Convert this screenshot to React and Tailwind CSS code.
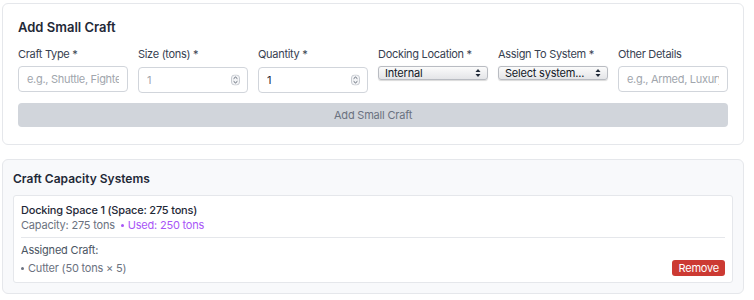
import { useState } from "react";

const Spinner = () => (
  <svg className="absolute right-[8px] top-1/2 -translate-y-1/2 w-[9px] h-[11px]" viewBox="0 0 9 11">
    <rect x="0.5" y="0.5" width="8" height="10" rx="3" fill="#f3f4f6" stroke="#c7cbd1" />
    <path d="M2.6 4.2 L4.5 2.6 L6.4 4.2" fill="none" stroke="#4b5563" strokeWidth="0.9" />
    <path d="M2.6 6.8 L4.5 8.4 L6.4 6.8" fill="none" stroke="#4b5563" strokeWidth="0.9" />
  </svg>
);

const SelectArrows = () => (
  <svg className="absolute right-[6px] top-1/2 -translate-y-1/2 w-[6px] h-[9px]" viewBox="0 0 6 9">
    <path d="M0.5 3.5 L3 0.5 L5.5 3.5 Z" fill="#1f2937" />
    <path d="M0.5 5.5 L3 8.5 L5.5 5.5 Z" fill="#1f2937" />
  </svg>
);

const Dot = () => (
  <span className="inline-block w-[3px] h-[3px] rounded-full bg-current align-middle mr-[4px] mb-[1px]" />
);

const Field = ({ label, children }) => (
  <div className="flex flex-col gap-[5px]">
    <label className="text-[11px] leading-[14px] tracking-[-0.3px] text-[#374151]">{label}</label>
    {children}
  </div>
);

const inputCls =
  "w-full h-[26px] rounded-[4px] border border-[#d1d5db] bg-white px-[8px] text-[11px] tracking-[-0.3px] text-[#1f2937] placeholder-[#a1a6ad] outline-none";

const FakeSelect = ({ value }) => (
  <div className="relative h-[14px] w-full rounded-[3px] border border-[#b9bcc2] bg-gradient-to-b from-[#fbfbfb] to-[#e4e5e8] shadow-[0_0.5px_1px_rgba(0,0,0,0.15)]">
    <span className="absolute left-[6px] top-1/2 -translate-y-1/2 text-[11px] leading-none tracking-[-0.2px] text-[#111827]">{value}</span>
    <SelectArrows />
  </div>
);

export default function App() {
  const [craftType, setCraftType] = useState("");
  const [qty, setQty] = useState("1");
  const [details, setDetails] = useState("");

  return (
    <div className="w-[754px] h-[300px] bg-white px-[2px] pt-[3px] font-['Inter','Noto_Sans',sans-serif]">
      {/* Add form */}
      <div className="w-[742px] rounded-[6px] border border-[#e5e7eb] bg-white px-[15px] pt-[14px] pb-[17px]">
        <h2 className="text-[13px] leading-[18px] font-semibold text-[#1f2937] mb-[11px]">Add Small Craft</h2>
        <div className="grid grid-cols-6 gap-x-[10px] items-start">
          <Field label="Craft Type *">
            <input
              className={inputCls}
              placeholder="e.g., Shuttle, Fighter"
              value={craftType}
              onChange={(e) => setCraftType(e.target.value)}
            />
          </Field>
          <Field label="Size (tons) *">
            <div className="relative">
              <input className={`${inputCls} text-[#a1a6ad]`} value="1" disabled readOnly />
              <Spinner />
            </div>
          </Field>
          <Field label="Quantity *">
            <div className="relative">
              <input className={inputCls} value={qty} onChange={(e) => setQty(e.target.value)} />
              <Spinner />
            </div>
          </Field>
          <Field label="Docking Location *">
            <FakeSelect value="Internal" />
          </Field>
          <Field label="Assign To System *">
            <FakeSelect value="Select system..." />
          </Field>
          <Field label="Other Details">
            <input
              className={inputCls}
              placeholder="e.g., Armed, Luxury, etc."
              value={details}
              onChange={(e) => setDetails(e.target.value)}
            />
          </Field>
        </div>
        <button
          disabled
          className="mt-[10px] w-full h-[24px] rounded-[4px] bg-[#d1d5db] text-[11px] tracking-[-0.2px] text-[#6b7280]"
        >
          Add Small Craft
        </button>
      </div>

      {/* Capacity systems */}
      <div className="mt-[14px] w-[742px] rounded-[6px] border border-[#e5e7eb] bg-[#f8f9fb] px-[10px] pt-[11px] pb-[10px]">
        <h3 className="text-[12px] leading-[16px] font-semibold text-[#1f2937] mb-[8px]">Craft Capacity Systems</h3>
        <div className="rounded-[3px] border border-[#e5e7eb] bg-white px-[7px] pt-[7px] pb-[6px] text-[11px] tracking-[-0.2px]">
          <div className="leading-[14px] font-medium text-[#1f2937]">Docking Space 1 (Space: 275 tons)</div>
          <div className="mt-[1px] leading-[14px] text-[#6b7280]">
            Capacity: 275 tons{" "}
            <span className="ml-[3px] text-[#a855f7]">
              <Dot />Used: 250 tons
            </span>
          </div>
          <div className="mt-[5px] border-t border-[#e5e7eb] pt-[5px]">
            <div className="leading-[14px] text-[#4b5563]">Assigned Craft:</div>
            <div className="mt-[3px] flex items-center justify-between">
              <span className="leading-[14px] text-[#6b7280]">
                <Dot />Cutter (50 tons × 5)
              </span>
              <button className="h-[16px] rounded-[3px] bg-[#cc3a33] px-[6px] text-[11px] leading-none text-white">
                Remove
              </button>
            </div>
          </div>
        </div>
      </div>
    </div>
  );
}
